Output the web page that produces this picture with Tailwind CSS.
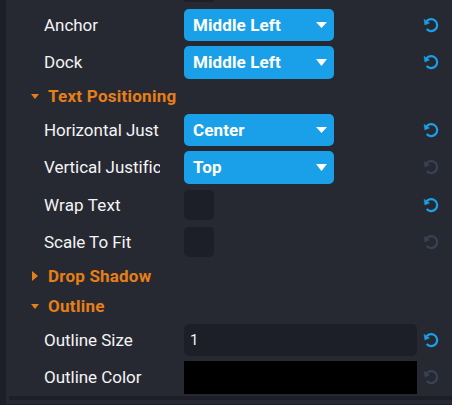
<!DOCTYPE html>
<html lang="en">
<head>
<meta charset="utf-8">
<title>Properties</title>
<script src="https://cdn.jsdelivr.net/npm/@tailwindcss/browser@4"></script>
</head>
<body class="w-[452px] h-[405px] overflow-hidden bg-[#272932] font-[Roboto,sans-serif] text-[17px] leading-6 tracking-[-0.03px] text-[#f4f4f5]">
<svg class="hidden">
  <symbol id="undo" viewBox="0 0 16 16">
    <path d="M3.6 4.2A6 6 0 1 1 3.7 12.1" fill="none" stroke="currentColor" stroke-width="2.2"/>
    <path d="M1 2.2L1.8 8L6.6 6Z" fill="currentColor" stroke="currentColor" stroke-width=".4"/>
  </symbol>
  <symbol id="down" viewBox="0 0 12 7" preserveAspectRatio="none"><path d="M0 0H12L6 7Z" fill="currentColor"/></symbol>
</svg>
<div class="flex h-full border-l-6 border-[#1c1f27]">
  <div class="flex flex-col w-full">
    <div class="ml-[178px] h-[2px] w-[30px] shrink-0 rounded-b-md bg-[#1c1f27]"></div>
    <div class="mt-[7px] h-[32px] flex items-center pl-[38px]">
      <span class="w-[116px] mr-6 overflow-hidden whitespace-nowrap">Anchor</span>
      <button class="w-[150px] h-full rounded-[5px] bg-[#1aa0e8] text-white font-bold tracking-[0.1px] flex items-center justify-between pl-[9px] pr-[7px]"><span>Middle Left</span><svg class="w-[11px] h-[6px]"><use href="#down"/></svg></button>
      <svg class="size-4 ml-auto mr-[13px] text-[#1aa0e8]"><use href="#undo"/></svg>
    </div>
    <div class="mt-[5px] h-[33px] flex items-center pl-[38px]">
      <span class="w-[116px] mr-6 pb-px overflow-hidden whitespace-nowrap">Dock</span>
      <button class="w-[150px] h-full rounded-[5px] bg-[#1aa0e8] text-white font-bold tracking-[0.1px] flex items-center justify-between pl-[9px] pr-[7px]"><span class="pb-px">Middle Left</span><svg class="w-[11px] h-[7px]"><use href="#down"/></svg></button>
      <svg class="size-4 mb-px ml-auto mr-[13px] text-[#1aa0e8]"><use href="#undo"/></svg>
    </div>
    <div class="h-[35px] flex items-center pl-[25px] font-bold tracking-[0.25px] text-[#e67f17]">
      <svg class="w-[8px] h-[5px] mr-[9px]" viewBox="0 0 8 5"><path d="M0 0H8L4 5Z" fill="currentColor"/></svg><span class="pb-px">Text Positioning</span>
    </div>
    <div class="h-[32px] flex items-center pl-[38px]">
      <span class="w-[116px] mr-6 overflow-hidden whitespace-nowrap">Horizontal Just</span>
      <button class="w-[150px] h-full rounded-[5px] bg-[#1aa0e8] text-white font-bold tracking-[0.1px] flex items-center justify-between pl-[9px] pr-[7px]"><span>Center</span><svg class="w-[11px] h-[6px]"><use href="#down"/></svg></button>
      <svg class="size-4 ml-auto mr-[13px] text-[#1aa0e8]"><use href="#undo"/></svg>
    </div>
    <div class="mt-[5px] h-[33px] flex items-center pl-[38px]">
      <span class="w-[116px] mr-6 pb-px overflow-hidden whitespace-nowrap">Vertical Justific</span>
      <button class="w-[150px] h-full rounded-[5px] bg-[#1aa0e8] text-white font-bold tracking-[0.1px] flex items-center justify-between pl-[9px] pr-[7px]"><span class="pb-px">Top</span><svg class="w-[11px] h-[7px]"><use href="#down"/></svg></button>
      <svg class="size-4 mb-px ml-auto mr-[13px] text-[#3a4154]"><use href="#undo"/></svg>
    </div>
    <div class="mt-[6px] h-[30px] flex items-center pl-[38px]">
      <span class="w-[116px] mr-6 tracking-[0.15px]">Wrap Text</span>
      <span class="size-[30px] rounded-[5px] bg-[#1c1f27]"></span>
      <svg class="size-4 ml-auto mr-[13px] text-[#1aa0e8]"><use href="#undo"/></svg>
    </div>
    <div class="mt-[7px] h-[30px] flex items-center pl-[38px]">
      <span class="w-[116px] mr-6">Scale To Fit</span>
      <span class="size-[30px] rounded-[5px] bg-[#1c1f27]"></span>
      <svg class="size-4 ml-auto mr-[13px] text-[#3a4154]"><use href="#undo"/></svg>
    </div>
    <div class="mt-1 h-[30px] flex items-center pl-[26px] font-bold tracking-[0.2px] text-[#e67f17]">
      <svg class="w-[6px] h-[10px] mr-[10px]" viewBox="0 0 6 10"><path d="M0 0V10L6 5Z" fill="currentColor"/></svg><span>Drop Shadow</span>
    </div>
    <div class="h-[30px] flex items-center pl-[25px] font-bold tracking-[0.3px] text-[#e67f17]">
      <svg class="w-[8px] h-[5px] mr-[9px]" viewBox="0 0 8 5"><path d="M0 0H8L4 5Z" fill="currentColor"/></svg><span>Outline</span>
    </div>
    <div class="mt-[3px] h-[32px] flex items-center pl-[38px]">
      <span class="w-[116px] mr-6">Outline Size</span>
      <span class="w-[233px] h-full rounded-[5px] bg-[#1c1f27] flex items-center pl-[6px] text-[15px]">1</span>
      <svg class="size-4 ml-auto mr-[13px] text-[#1aa0e8]"><use href="#undo"/></svg>
    </div>
    <div class="mt-[5px] h-[33px] flex items-center pl-[38px]">
      <span class="w-[116px] mr-6 pb-px">Outline Color</span>
      <span class="w-[233px] h-full bg-black"></span>
      <svg class="size-4 mb-px ml-auto mr-[13px] text-[#3a4154]"><use href="#undo"/></svg>
    </div>
    <div class="mt-[2px] ml-[3px] h-[4px] bg-[#1c1f27]"></div>
    <div class="h-[5px] border-b border-[#1c1f27]"></div>
  </div>
</div>
</body>
</html>
